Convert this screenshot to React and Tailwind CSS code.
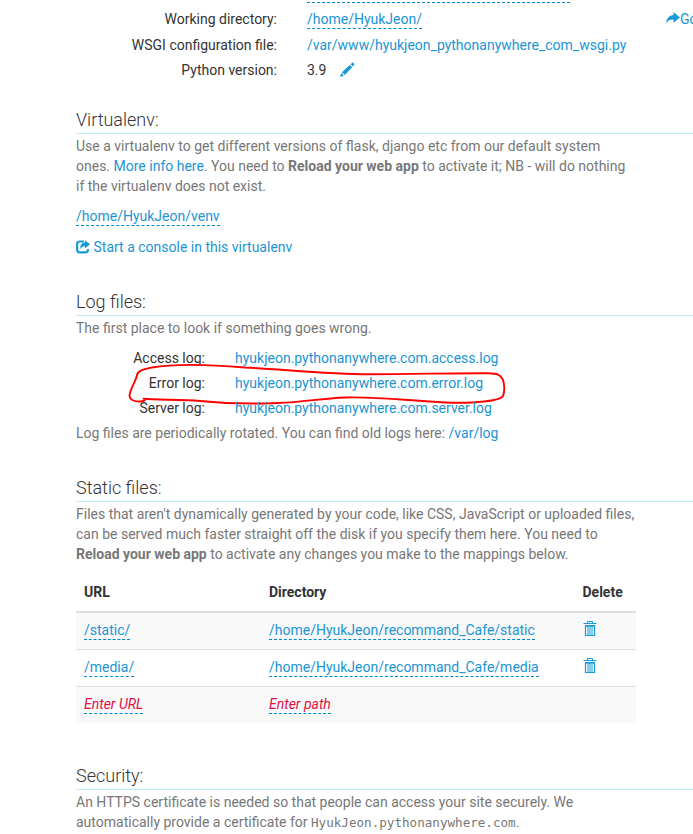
import clsx from "clsx";

const ERROR_LOG = "hyukjeon.pythonanywhere.com.error.log";

const staticFiles = [
    { url: "/static/", path: "/home/HyukJeon/recommand_Cafe/static" },
    { url: "/media/", path: "/home/HyukJeon/recommand_Cafe/media" },
];

const logs = [
    { label: "Access log:", file: "hyukjeon.pythonanywhere.com.access.log" },
    { label: "Error log:", file: ERROR_LOG },
    { label: "Server log:", file: "hyukjeon.pythonanywhere.com.server.log" },
];

function Link({ children }) {
    return (
        <a href="#" className="text-[#1b95d3]">
            {children}
        </a>
    );
}

// Inline-editable value with the dashed underline
function Editable({ children, empty }) {
    return (
        <a
            href="#"
            className={clsx(
                "border-b border-dashed border-[#0088cc] pb-px",
                empty ? "italic text-[#dd1144]" : "text-[#1b95d3]"
            )}
        >
            {children}
        </a>
    );
}

function Heading({ children }) {
    return (
        <h2 className="h-6 border-b border-[#bfeaf8] text-[18px] leading-5 font-light text-[#333]">
            {children}
        </h2>
    );
}

function PencilIcon() {
    return (
        <svg className="mb-[2px] h-[15px] w-[15px]" viewBox="0 0 15 15" fill="#169bd7">
            <path d="M0 14.8 1.2 11 4 13.8ZM1.9 10.2 9.8 2.9 12.2 5.3 4.8 13ZM10.6 2.2 12 0.9C12.5 0.5 13 0.5 13.4 0.9L14.2 1.8C14.6 2.2 14.6 2.7 14.2 3.1L12.9 4.5Z" />
        </svg>
    );
}

function ShareArrowIcon() {
    return (
        <svg className="h-[12px] w-[14px]" viewBox="0 0 14 12" fill="#169bd7">
            <path d="M7.5 0 14 5.4 7.5 10.8V7.6C4.5 7.4 2.2 8 0.2 11.4 0.4 6.8 3.2 3.5 7.5 3.1Z" />
        </svg>
    );
}

function ConsoleIcon() {
    return (
        <svg className="h-[14px] w-[14px]" viewBox="0 0 14 14" fill="#169bd7">
            <path d="M8 1.5H3.7A2.6 2.6 0 0 0 1.1 4.1V9.8A2.6 2.6 0 0 0 3.7 12.4H9.4A2.6 2.6 0 0 0 12 9.8V9" fill="none" stroke="#169bd7" strokeWidth="2.2" />
            <path d="M9 0.3 14 4.3 9 8.6V6.2C6.5 6.1 5.5 6.8 4.4 9.2 3.8 5.2 5.8 2.6 9 2.5Z" />
        </svg>
    );
}

function TrashIcon() {
    return (
        <svg className="ml-px h-[16px] w-[14px]" viewBox="0 0 14 16" fill="none" stroke="#169bd7">
            <path d="M4.5 2.5V0.5H9.5V2.5M0.5 2.5H13.5" />
            <path d="M2 4.8H12" strokeWidth="1.6" />
            <path d="M2.5 4V14.5H11.5V4" strokeWidth="1.2" />
            <path d="M5 5V14M7 5V14M9 5V14" />
        </svg>
    );
}

export default function WebAppConfig() {
    return (
        <div className="relative h-[834px] w-full overflow-hidden bg-white font-['Roboto',sans-serif] text-[14px] leading-5 text-[#777]">
            {/* Code */}
            <div className="flex h-[110px] justify-between text-[#333]">
                <div>
                    <div className="ml-[307px] h-[3px] w-[263px] border-b border-dashed border-[#0088cc]" />
                    <div className="grid grid-cols-[277px_auto] gap-x-[30px] pt-[6px]">
                        <div className="h-[26px] text-right">Working directory:</div>
                        <div><Editable>/home/HyukJeon/</Editable></div>
                        <div className="h-[25px] text-right">WSGI configuration file:</div>
                        <div><Link>/var/www/hyukjeon_pythonanywhere_com_wsgi.py</Link></div>
                        <div className="text-right">Python version:</div>
                        <div className="flex h-5 items-center gap-[14px]">
                            3.9 <PencilIcon />
                        </div>
                    </div>
                </div>
                <a href="#" className="mt-[9px] flex h-5 w-[27px] shrink-0 items-center overflow-hidden whitespace-nowrap text-[#1b95d3]">
                    <span className="shrink-0 pb-0.5"><ShareArrowIcon /></span>
                    Go to directory
                </a>
            </div>

            <main className="pl-[76px]">
                {/* Virtualenv */}
                <section className="h-[182px]">
                    <Heading>Virtualenv:</Heading>
                    <p className="mt-[2px] w-[560px]">
                        Use a virtualenv to get different versions of flask, django etc from our default system
                        ones. <Link>More info here</Link>. You need to <b>Reload your web app</b> to activate it; NB - will do nothing
                        if the virtualenv does not exist.
                    </p>
                    <div className="mt-2.5"><Editable>/home/HyukJeon/venv</Editable></div>
                    <a href="#" className="mt-[11px] flex items-center gap-[3.5px] text-[#1b95d3]">
                        <ConsoleIcon />
                        Start a console in this virtualenv
                    </a>
                </section>

                {/* Log files */}
                <section className="h-[186px]">
                    <Heading>Log files:</Heading>
                    <p className="mt-[2px]">The first place to look if something goes wrong.</p>
                    <div className="mt-2.5">
                        {logs.map((log) => (
                            <div key={log.label} className="flex h-[25px] gap-[30px]">
                                <span className="w-[129px] text-right text-[#333]">{log.label}</span>
                                <span className="relative">
                                    <Link>{log.file}</Link>
                                    {log.file === ERROR_LOG && (
                                        <svg
                                            className="pointer-events-none absolute -top-[13px] -left-[110px] h-[46px] w-[385px] max-w-none"
                                            viewBox="125 360 385 46"
                                            fill="none"
                                            stroke="#f00"
                                            strokeWidth="1.9"
                                            strokeLinecap="round"
                                            strokeLinejoin="round"
                                        >
                                            <path d="M143.5 398.7C155 400 180 399.5 200 401C225 403.5 255 404 278 403C305 402 320 398.5 345 397.5C380 396.5 410 401 445 402.5C475 403.5 500 401 503 396C505 391 504.5 383 502.5 379C500 374.5 498 373.5 488 373.2C460 373 420 374 370 374.3C325 374 280 369 245 367.5C215 365 175 363.5 152 367.5C143 369.5 138 370.5 137 375C136 381 130 389 129.5 396C130 400 134 401.5 140 401.5C143 401.5 146 400 145 398.7" />
                                        </svg>
                                    )}
                                </span>
                            </div>
                        ))}
                    </div>
                    <p>Log files are periodically rotated. You can find old logs here: <Link>/var/log</Link></p>
                </section>

                {/* Static files */}
                <section className="h-[288px]">
                    <Heading>Static files:</Heading>
                    <p className="mt-[2px] w-[560px]">
                        Files that aren't dynamically generated by your code, like CSS, JavaScript or uploaded files,
                        can be served much faster straight off the disk if you specify them here. You need to <b>Reload your web app</b> to activate any changes you make to the mappings below.
                    </p>
                    <table className="mt-2.5 w-[560px] table-fixed border-separate border-spacing-0 text-[#333]">
                        <thead>
                            <tr className="h-[39px] text-left">
                                <th className="w-[185px] border-b-2 border-[#ddd] px-2 pt-0 pb-0.5 font-bold">URL</th>
                                <th className="w-[313px] border-b-2 border-[#ddd] px-2 pt-0 pb-0.5 font-bold">Directory</th>
                                <th className="border-b-2 border-[#ddd] pt-0 pr-0 pb-0.5 pl-[8.5px] font-bold">Delete</th>
                            </tr>
                        </thead>
                        <tbody>
                            {staticFiles.map((file) => (
                                <tr key={file.url} className="h-[37px] odd:bg-[#f9f9f9]">
                                    <td className="border-b border-[#ddd] px-2 pt-0 pb-0.5">
                                        <Editable>{file.url}</Editable>
                                    </td>
                                    <td className="border-b border-[#ddd] px-2 pt-0 pb-0.5">
                                        <Editable>{file.path}</Editable>
                                    </td>
                                    <td className="border-b border-[#ddd] px-2 pt-0 pb-1">
                                        <TrashIcon />
                                    </td>
                                </tr>
                            ))}
                            <tr className="h-[36px] bg-[#f9f9f9]">
                                <td className="px-2 pt-0 pb-0.5"><Editable empty>Enter URL</Editable></td>
                                <td className="px-2 pt-0 pb-0.5"><Editable empty>Enter path</Editable></td>
                                <td />
                            </tr>
                        </tbody>
                    </table>
                </section>

                {/* Security */}
                <section>
                    <Heading>Security:</Heading>
                    <p className="mt-[2px] w-[560px]">
                        An HTTPS certificate is needed so that people can access your site securely. We
                        automatically provide a certificate for{" "}
                        <code className="font-['DejaVu_Sans_Mono',monospace] text-[12.6px]">HyukJeon.pythonanywhere.com</code>.
                    </p>
                </section>
            </main>
        </div>
    );
}
